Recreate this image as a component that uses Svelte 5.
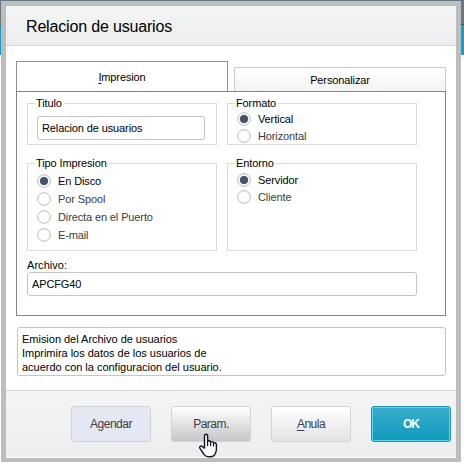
<script lang="ts">
  let titulo = $state("Relacion de usuarios");
  let archivo = $state("APCFG40");
  let formato = $state("Vertical");
  let tipo = $state("En Disco");
  let entorno = $state("Servidor");

  const formatos = ["Vertical", "Horizontal"];
  const tipos = ["En Disco", "Por Spool", "Directa en el Puerto", "E-mail"];
  const entornos = ["Servidor", "Cliente"];
</script>

<div class="page">
  <div class="dialog">
    <header><h1>Relacion de usuarios</h1></header>

    <main>
      <div class="tabs">
        <button class="tab active"><span><u>I</u>mpresion</span></button>
        <button class="tab"><span>Personalizar</span></button>
      </div>

      <div class="panel">
        <div class="groups">
          <fieldset class="short">
            <legend>Titulo</legend>
            <input class="titulo" type="text" bind:value={titulo} />
          </fieldset>
          <fieldset class="short">
            <legend>Formato</legend>
            <div class="options formato">
              {#each formatos as option}
                <label class:selected={formato === option}>
                  <input type="radio" value={option} bind:group={formato} />
                  <span>{option}</span>
                </label>
              {/each}
            </div>
          </fieldset>
          <fieldset class="tall">
            <legend>Tipo Impresion</legend>
            <div class="options wide">
              {#each tipos as option}
                <label class:selected={tipo === option}>
                  <input type="radio" value={option} bind:group={tipo} />
                  <span>{option}</span>
                </label>
              {/each}
            </div>
          </fieldset>
          <fieldset class="tall">
            <legend>Entorno</legend>
            <div class="options">
              {#each entornos as option}
                <label class:selected={entorno === option}>
                  <input type="radio" value={option} bind:group={entorno} />
                  <span>{option}</span>
                </label>
              {/each}
            </div>
          </fieldset>
        </div>

        <label class="field-label" for="archivo">Archivo:</label>
        <input id="archivo" type="text" bind:value={archivo} />
      </div>

      <div class="description">
        Emision del Archivo de usuarios<br />
        Imprimira los datos de los usuarios de<br />
        acuerdo con la configuracion del usuario.
      </div>
    </main>

    <footer>
      <button class="btn agendar">Agendar</button>
      <button class="btn hovered">Param.</button>
      <button class="btn"><u>A</u>nula</button>
      <button class="btn primary">OK</button>
    </footer>
  </div>

  <svg class="pointer" width="19" height="25" viewBox="0 0 19 25">
    <path
      d="M5.5 15.5V3.2C5.5 .5 8.6 .5 8.6 3.2V8.5C9.2 7.3 11.4 7.4 11.6 9.1C12.4 8.2 14.3 8.5 14.5 10.2C15.6 9.4 17.4 10 17.4 11.7V16.5C17.4 18.7 16.5 20.2 15.6 21.8C14.7 23.3 12.8 23.8 10.3 23.8C7.2 23.8 5.6 22.5 4.4 20.5L1 15.4C0 13.6 2 12.2 3.4 13.5L5.5 15.5"
      fill="#fff"
      stroke="#15152b"
      stroke-width="1.4"
      stroke-linejoin="round"
    />
    <path
      d="M8.6 8V13M11.6 9V13.3M14.5 10V13.6"
      fill="none"
      stroke="#15152b"
      stroke-width="1.2"
    />
  </svg>
</div>

<style>
  :global(body) {
    margin: 0;
  }
  .page {
    position: relative;
    box-sizing: border-box;
    width: 464px;
    height: 464px;
    padding: 1px;
    overflow: hidden;
    background: linear-gradient(
      #657982 24px,
      #46525a 24px 25px,
      #1aa0bf 25px 55px,
      #fff 55px
    );
    font-family: "Liberation Sans", Arial, sans-serif;
    font-size: 11px;
    letter-spacing: -0.12px;
    color: #000;
  }
  .page * {
    box-sizing: border-box;
  }

  .dialog {
    display: flex;
    flex-direction: column;
    width: 460px;
    height: 461px;
    padding-bottom: 1px;
    border: 5px solid #bcbdbd;
    border-bottom-width: 4px;
    background: #fff;
  }
  header {
    height: 40px;
    padding: 11px 20px 0;
    border-bottom: 1px solid #d5d7d8;
    background: linear-gradient(#f4f6f5, #ebedef);
  }
  h1 {
    margin: 0;
    font-size: 16px;
    font-weight: normal;
    line-height: 20px;
    letter-spacing: -0.17px;
  }
  main {
    flex: 1;
    padding: 15px 10px 0;
  }

  input,
  button {
    margin: 0;
    font: inherit;
    letter-spacing: inherit;
    color: inherit;
  }

  .tabs {
    display: flex;
    align-items: flex-end;
    gap: 6px;
    height: 30px;
  }
  .tab {
    width: 212px;
    height: 24px;
    padding: 0;
    border: 1px solid #c9cacb;
    border-bottom: none;
    background: linear-gradient(#fff, #f3f3f4);
  }
  .tab.active {
    height: 30px;
    border-color: #909197;
    background: #fff;
  }
  u {
    text-underline-offset: 2px;
  }

  .panel {
    height: 225px;
    padding: 5px 10px 0;
    border: 1px solid #82838f;
  }
  .groups {
    display: grid;
    grid-template-columns: 190px 190px;
    gap: 12px 10px;
  }
  fieldset {
    min-width: 0;
    margin: 0;
    padding: 0 9px;
    border: 1px solid #d9dadb;
  }
  .short {
    height: 48px;
  }
  .tall {
    height: 94px;
  }
  legend {
    height: 13px;
    margin-left: -2px;
    padding: 0 2px 0 1px;
    line-height: 13px;
  }
  input[type="text"] {
    display: block;
    width: 390px;
    height: 24px;
    padding: 0 4px;
    border: 1px solid #c4c5c6;
    border-radius: 3px;
    background: #fff;
    outline: none;
  }
  input.titulo {
    width: 168px;
    margin-top: 6px;
  }

  .options {
    padding-top: 1px;
  }
  .options.formato {
    padding-top: 0;
  }
  .options label {
    display: flex;
    align-items: center;
    gap: 7px;
    height: 17px;
    color: #3c3c3c;
  }
  .options.wide {
    padding-top: 2px;
  }
  .options.wide label {
    height: 18px;
  }
  .options label.selected {
    color: #000;
  }
  input[type="radio"] {
    appearance: none;
    width: 14px;
    height: 14px;
    border: 1px solid #c8c9ca;
    border-radius: 50%;
    background: #fff;
    box-shadow: inset 0 0 0 0.5px #d4d5d6;
  }
  input[type="radio"]:checked {
    background: radial-gradient(circle, #46536a 3.7px, #fff 4.6px);
  }

  .field-label {
    display: block;
    height: 21px;
    padding-top: 8px;
    line-height: 13px;
    letter-spacing: 0.05px;
  }
  .description {
    height: 49px;
    margin: 11px 0 0 1px;
    padding: 4px;
    border: 1px solid #c4c5c6;
    border-radius: 3px;
    line-height: 14px;
    letter-spacing: -0.02px;
  }

  footer {
    display: flex;
    justify-content: flex-end;
    gap: 20px;
    height: 67px;
    padding: 15px 5px 0;
    border-top: 1px solid #d5d7d8;
    background: linear-gradient(#f4f6f5, #ebedef);
  }
  .btn {
    width: 80px;
    height: 36px;
    padding: 0;
    border: 1px solid #d2d4d5;
    border-radius: 3px;
    background: linear-gradient(#fff, #e3e3e4);
    font-size: 12px;
    letter-spacing: -0.5px;
    color: #3e4047;
  }
  .btn.agendar {
    background: #e3e8f2;
  }
  .btn.hovered {
    background: linear-gradient(#fff, #c4c6c8);
  }
  .btn.primary {
    border-color: #2493b4;
    background: linear-gradient(#3aaccc, #109abd);
    box-shadow: inset 0 0 0 1px #55d5f5;
    font-weight: bold;
    letter-spacing: -1px;
    color: #fff;
  }

  .pointer {
    position: absolute;
    left: 199px;
    top: 433px;
  }
</style>
